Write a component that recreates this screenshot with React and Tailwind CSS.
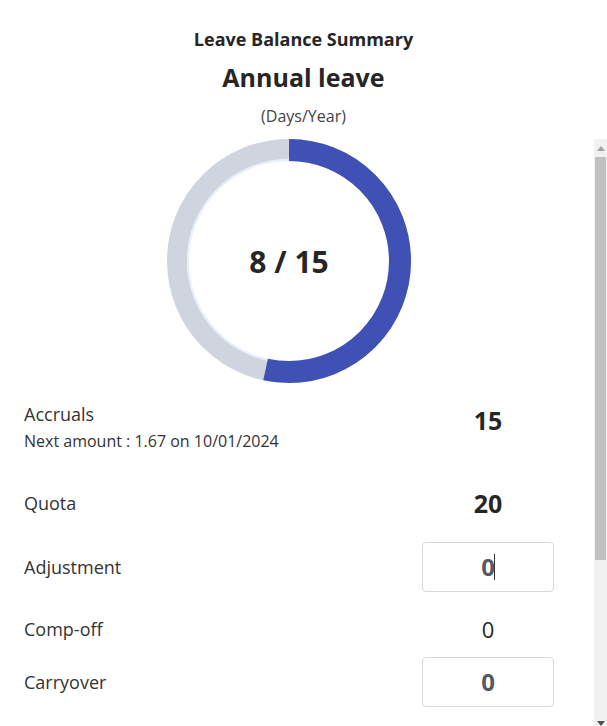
const font = { fontFamily: '"Open Sans", Lato, sans-serif' }

function Ring({ used, total }) {
  const r = 111
  const c = 2 * Math.PI * r
  const dash = (used / total) * c
  return (
    <div className="relative h-[244px] w-[244px]">
      <svg width="244" height="244" viewBox="0 0 244 244">
        <circle cx="122" cy="122" r="112" fill="none" stroke="#cfd4de" strokeWidth="20" />
        <circle cx="122" cy="122" r="101" fill="none" stroke="#e6eefb" strokeWidth="2" />
        <circle
          cx="122"
          cy="122"
          r={r}
          fill="none"
          stroke="#3f51b5"
          strokeWidth="22"
          strokeDasharray={`${dash} ${c}`}
          transform="rotate(-90 122 122)"
        />
      </svg>
      <div className="absolute inset-0 flex items-center justify-center text-[30px] font-bold text-[#262626]">
        {used} / {total}
      </div>
    </div>
  )
}

function Row({ label, children, className }) {
  return (
    <div className={`flex h-[50px] items-center ${className}`}>
      <div className="flex-1 text-[18px] leading-[24px] text-[#333]">{label}</div>
      <div className="flex w-[132px] justify-center">{children}</div>
    </div>
  )
}

function Box({ value, caret }) {
  return (
    <div className="flex h-[50px] w-[132px] items-center justify-center rounded-[4px] border border-[#d9d9d9] bg-white">
      <span className="text-[24px] font-bold leading-[30px] text-[#555963]">{value}</span>
      {caret ? <span className="ml-[-1px] h-[26px] w-px bg-[#333]" /> : null}
    </div>
  )
}

export default function App() {
  return (
    <div className="flex h-[726px] w-[607px] flex-col overflow-hidden bg-white" style={font}>
      <div className="flex h-[139px] flex-col items-center pt-[27px]">
        <div className="text-[18px] font-bold leading-[24px] text-[#262626]">Leave Balance Summary</div>
        <div className="mt-[9px] text-[25px] font-bold leading-[34px] text-[#262626]">Annual leave</div>
        <div className="mt-[12px] text-[16px] leading-[20px] text-[#444]">(Days/Year)</div>
      </div>
      <div className="flex flex-1">
        <div className="flex-1 pl-[24px] pr-[40px]">
          <div className="flex justify-center">
            <Ring used={8} total={15} />
          </div>
          <div className="mt-[19px] flex items-start">
            <div className="flex-1">
              <div className="text-[18px] leading-[24px] text-[#333]">Accruals</div>
              <div className="mt-[5px] text-[16px] leading-[20px] text-[#333]">
                Next amount : 1.67 on 10/01/2024
              </div>
            </div>
            <div className="mt-[3px] flex w-[132px] justify-center">
              <span className="text-[25px] font-bold leading-[30px] text-[#262626]">15</span>
            </div>
          </div>
          <Row label="Quota" className="mt-[27px]">
            <span className="text-[25px] font-bold leading-[30px] text-[#262626]">20</span>
          </Row>
          <Row label="Adjustment" className="mt-[14px]">
            <Box value="0" caret />
          </Row>
          <Row label="Comp-off" className="mt-[12px]">
            <span className="text-[22px] leading-[30px] text-[#262626]">0</span>
          </Row>
          <Row label="Carryover" className="mt-[3px]">
            <Box value="0" />
          </Row>
        </div>
        <div className="flex w-[13px] flex-col bg-[#f1f1f1]">
          <div className="flex h-[18px] items-center justify-center">
            <svg width="8" height="5" viewBox="0 0 8 5">
              <path d="M4 0 L8 5 L0 5 Z" fill="#a3a3a3" />
            </svg>
          </div>
          <div className="mx-[1px] h-[403px] bg-[#c1c1c1]" />
          <div className="flex-1" />
          <div className="flex h-[10px] items-end justify-center">
            <svg width="8" height="5" viewBox="0 0 8 5">
              <path d="M0 0 L8 0 L4 5 Z" fill="#505050" />
            </svg>
          </div>
        </div>
      </div>
    </div>
  )
}
